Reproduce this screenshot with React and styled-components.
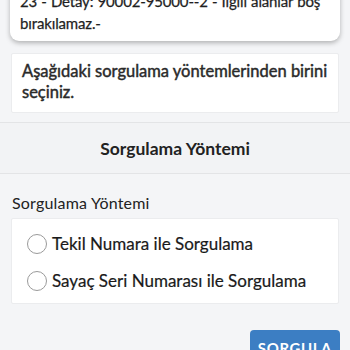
import React, {useState} from 'react'
import styled, {createGlobalStyle} from "styled-components";

const GlobalStyle = createGlobalStyle`
  html, body {
    margin: 0;
    padding: 0;
    background: #f4f5f7;
    font-family: Lato, "Noto Sans", sans-serif;
    color: #1f1f1f;
    overflow: hidden;
  }
`;

const Page = styled.div`
  width: 350px;
  height: 350px;
  overflow: hidden;
  padding-top: 1px;
  box-sizing: border-box;
`;

const ErrorCard = styled.div`
  margin: -21px 10px 0 10px;
  background: #fff;
  border-radius: 0 0 9px 9px;
  box-shadow: 0 2px 5px rgba(0, 0, 0, 0.28);
  padding: 10px 2px 7px 10px;
  font-size: 15px;
  letter-spacing: -0.15px;
  word-spacing: 0.5px;
  line-height: 22px;
  -webkit-text-stroke: 0.25px #1f1f1f;
`;

const InfoCard = styled.div`
  margin: 12px 11px 0 11px;
  background: #fff;
  border: 1px solid #ebecee;
  border-radius: 2px;
  padding: 7px 6px 9px 10px;
  font-size: 16.5px;
  line-height: 21px;
  color: #2a2a2a;
  -webkit-text-stroke: 0.45px #2a2a2a;
`;

const SectionHeader = styled.div`
  margin-top: 9px;
  height: 50px;
  border-top: 1px solid #e3e4e6;
  border-bottom: 1px solid #e3e4e6;
  background: #f2f3f5;
  display: flex;
  align-items: center;
  justify-content: center;
  font-size: 17.5px;
  font-weight: 700;
  color: #222;
`;

const Label = styled.div`
  margin: 19px 0 0 12px;
  font-size: 16px;
  letter-spacing: 0.2px;
  line-height: 20px;
  color: #222;
`;

const RadioCard = styled.div`
  margin: 5px 11px 0 11px;
  background: #fff;
  border: 1px solid #ebecee;
  border-radius: 2px;
  padding: 14px 0 11px 15px;
  display: flex;
  flex-direction: column;
  gap: 15px;
`;

const RadioRow = styled.label`
  display: flex;
  align-items: center;
  gap: 5px;
  font-size: 17px;
  line-height: 22px;
  color: #1a1a1a;
  -webkit-text-stroke: 0.2px #1a1a1a;
  cursor: pointer;
`;

const Circle = styled.span`
  width: 20px;
  height: 20px;
  border-radius: 50%;
  border: 1.5px solid ${({checked}) => checked ? '#3b7dc4' : '#9a9a9a'};
  box-sizing: border-box;
  background: #fff;
  display: flex;
  align-items: center;
  justify-content: center;
  &::after{
    content: '';
    width: 10px;
    height: 10px;
    border-radius: 50%;
    background: ${({checked}) => checked ? '#3b7dc4' : 'transparent'};
  }
`;

const Footer = styled.div`
  display: flex;
  justify-content: flex-end;
  padding: 26px 10px 0 0;
`;

const Button = styled.button`
  width: 90px;
  height: 36px;
  border: none;
  border-radius: 4px;
  background: #3c7ec3;
  color: #fff;
  font-family: Lato, "Noto Sans", sans-serif;
  font-weight: 700;
  font-size: 15px;
  letter-spacing: 0.6px;
  padding: 0;
  cursor: pointer;
`;

const options = [
    {value: 'tekil', text: 'Tekil Numara ile Sorgulama'},
    {value: 'sayac', text: 'Sayaç Seri Numarası ile Sorgulama'}
];

const App = () => {
    const [selected, setSelected] = useState(null);

    return (
        <Page>
            <GlobalStyle/>
            <ErrorCard>
                23 - Detay: 90002-95000--2 - İlgili alanlar boş bırakılamaz.-
            </ErrorCard>
            <InfoCard>
                Aşağıdaki sorgulama yöntemlerinden birini seçiniz.
            </InfoCard>
            <SectionHeader>Sorgulama Yöntemi</SectionHeader>
            <Label>Sorgulama Yöntemi</Label>
            <RadioCard>
                {
                    options.map(opt => (
                        <RadioRow key={opt.value} onClick={() => setSelected(opt.value)}>
                            <Circle checked={selected === opt.value}/>
                            {opt.text}
                        </RadioRow>
                    ))
                }
            </RadioCard>
            <Footer>
                <Button>SORGULA</Button>
            </Footer>
        </Page>
    );
};

export default App
